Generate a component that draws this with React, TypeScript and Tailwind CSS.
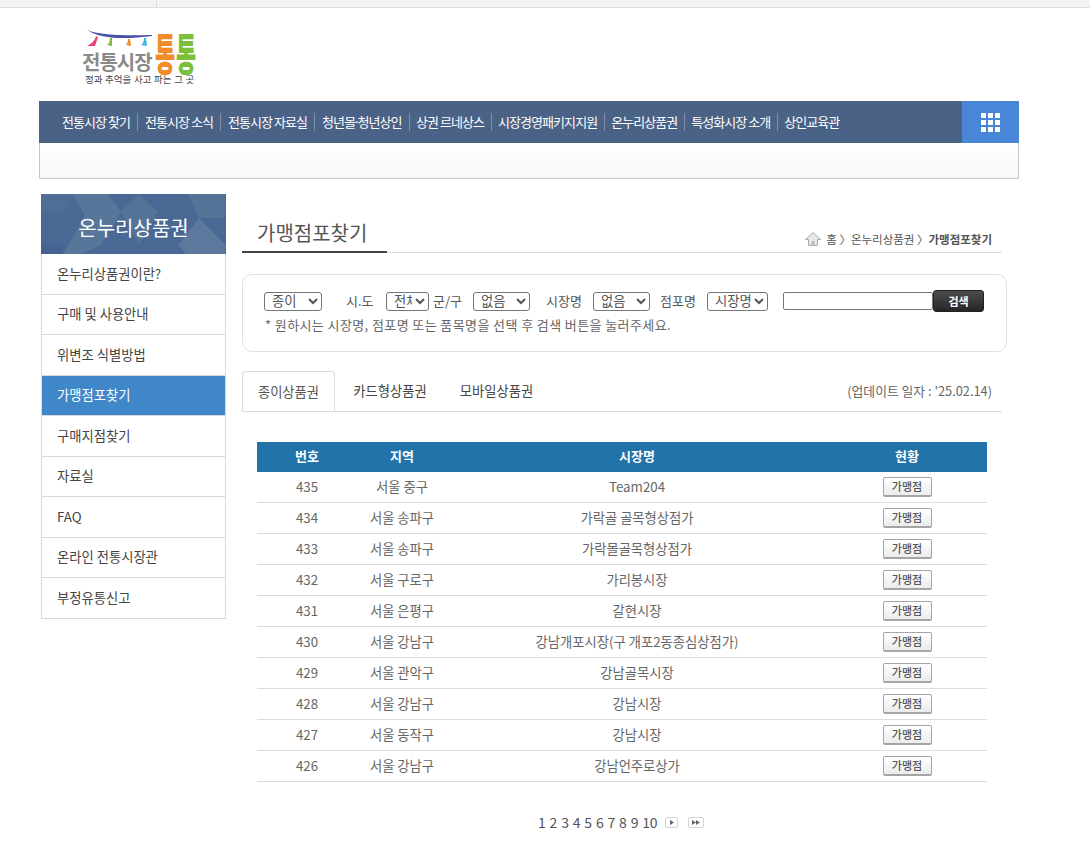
const navItems = ["전통시장 찾기", "전통시장 소식", "전통시장 자료실", "청년몰·청년상인", "상권 르네상스", "시장경영패키지지원", "온누리상품권", "특성화시장 소개", "상인교육관"];
const sideItems = ["온누리상품권이란?", "구매 및 사용안내", "위변조 식별방법", "가맹점포찾기", "구매지점찾기", "자료실", "FAQ", "온라인 전통시장관", "부정유통신고"];
const rows = [
  ["435", "서울 중구", "Team204"],
  ["434", "서울 송파구", "가락골 골목형상점가"],
  ["433", "서울 송파구", "가락몰골목형상점가"],
  ["432", "서울 구로구", "가리봉시장"],
  ["431", "서울 은평구", "갈현시장"],
  ["430", "서울 강남구", "강남개포시장(구 개포2동종심상점가)"],
  ["429", "서울 관악구", "강남골목시장"],
  ["428", "서울 강남구", "강남시장"],
  ["427", "서울 동작구", "강남시장"],
  ["426", "서울 강남구", "강남언주로상가"],
];

const selectCls = "h-[19px] border border-[#767676] rounded-[3px] text-[13.3px] pl-[3px] text-[#555] font-[family-name:'Liberation_Sans','Noto_Sans_CJK_KR',sans-serif]";

function navCls(i: number) {
  if (i === 0) return "pr-[7px] border-r border-[#7d90aa]";
  if (i < 4) return "px-[7px] border-r border-[#7d90aa]";
  if (i === 8) return "pl-[6.5px]";
  return "px-[6.5px] border-r border-[#7d90aa]";
}

function Logo() {
  return (
    <div className="relative w-[120px] h-[66px] font-[family-name:'Liberation_Sans','Noto_Sans_CJK_KR',sans-serif]">
      <svg className="absolute left-0 top-0" width="120" height="30" viewBox="0 0 120 30">
        <path d="M5 1 C15 5 32 7 70 6 L70 7 C46 10 20 11 5 1Z" fill="#4a4fa8" />
        <path d="M14 7 L16 8 L13 17 L5 17 C9 15 13 12 14 7Z" fill="#e8407a" />
        <path d="M28 9 L30 9 L30 17 L25 16 C27 15 28 12 28 9Z" fill="#7cbf3a" />
        <path d="M46 10 L48 10 L49 17 L44 16 C45 15 46 13 46 10Z" fill="#f28c28" />
        <path d="M62 9 L64 9 L65 17 L59 16 C61 15 62 12 62 9Z" fill="#3bb8e8" />
      </svg>
      <span className="absolute left-0 top-[23px] text-[20px] leading-[22px] font-bold text-[#8a8a8a] tracking-[-1px] whitespace-nowrap">전통시장</span>
      <div className="absolute left-[73px] top-[7px] flex">
        <span className="block w-[21px] h-[40px] text-[44px] leading-[40px] font-black text-[#f28c28] scale-x-[0.5] origin-left">통</span>
        <span className="block w-[21px] h-[40px] text-[44px] leading-[40px] font-black text-[#7cbf3a] scale-x-[0.5] origin-left">통</span>
      </div>
      <div className="absolute left-[3px] top-[45px] text-[9.5px] leading-[12px] text-[#444] whitespace-nowrap">정과 추억을 사고 파는 그 곳</div>
    </div>
  );
}

function SideHeader() {
  return (
    <div className="relative h-[60px] bg-[#4a6894] overflow-hidden flex items-center justify-center pt-[8px]">
      <svg className="absolute inset-0" width="184" height="60" viewBox="0 0 184 60">
        <polygon points="0,0 32,0 24,18 0,18" fill="#4f6d97" />
        <polygon points="32,0 67,0 80,18 60,51 40,60 22,60 44,22" fill="#587699" />
        <polygon points="80,18 98,0 117,18 98,51" fill="#557397" />
        <polygon points="147,0 184,0 184,24 158,24" fill="#557397" />
        <polygon points="137,51 158,24 184,51 184,60 145,60" fill="#5c799d" />
        <polygon points="0,51 22,51 22,60 0,60" fill="#456290" />
      </svg>
      <span className="relative text-[20px] text-white">온누리상품권</span>
    </div>
  );
}

export default function App() {
  return (
    <div className="w-[1090px] h-[854px] bg-white overflow-hidden text-[#555] font-[family-name:'Noto_Sans_CJK_KR','Noto_Sans',sans-serif]">
      <div className="h-[8px] bg-[#f3f3f3] border-b border-[#dedede] pl-[156px]">
        <div className="w-px h-[7px] bg-[#dcdcdc]" />
      </div>
      <header className="h-[93px] pl-[82px] pt-[21px]">
        <Logo />
      </header>

      <div className="ml-[39px] w-[980px]">
        <nav className="h-[42px] bg-[#4a6285] flex items-center justify-between">
          <ul className="flex items-center pl-[23px] text-[13px] tracking-[-0.95px] text-white">
            {navItems.map((n, i) => (
              <li key={n} className={`whitespace-nowrap leading-[15px] h-[18px] flex items-center pb-[1px] ${navCls(i)}`}>
                {n.includes("·") ? (
                  <span>{n.split("·")[0]}<span className="-mx-[2px]">·</span>{n.split("·")[1]}</span>
                ) : n}
              </li>
            ))}
          </ul>
          <div className="w-[57px] h-[42px] bg-[#4a86d8] flex items-center justify-center">
            <div className="grid grid-cols-3 gap-[2px]">
              {Array.from({ length: 9 }).map((_, i) => <span key={i} className="w-[5px] h-[5px] bg-white" />)}
            </div>
          </div>
        </nav>
        <div className="h-[36px] border border-t-0 border-[#c8c8c8] bg-gradient-to-b from-white to-[#f7f7f7]" />
      </div>

      <div className="flex pl-[41px] pt-[15px]">
        <aside className="w-[185px] shrink-0">
          <SideHeader />
          <ul className="border-x border-[#d8d8d8] text-[13.3px] text-[#444]">
            {sideItems.map((s) => (
              <li key={s} className={`h-[40.5px] flex items-center pl-[15px] pb-[0.4px] border-b border-[#d8d8d8] ${s === "가맹점포찾기" ? "bg-[#3f87c8] text-white" : ""}`}>{s}</li>
            ))}
          </ul>
        </aside>

        <main className="ml-[16px] w-[765px] shrink-0">
          <div className="w-[760px] h-[44px] border-b border-[#dcdcdc] flex justify-between items-end mt-[15px]">
            <h2 className="w-[145px] h-[44px] border-b-2 border-[#444] pl-[15px] text-[20px] leading-[48px] text-[#555] -mb-px">가맹점포찾기</h2>
            <div className="flex items-center pr-[10px] pb-[5px] text-[11.5px] leading-[16px] text-[#555]">
              <svg width="16" height="14" viewBox="0 0 16 14" className="mr-[5px]">
                <path d="M8 .5 L15.5 7.5 H12.5 V13.5 H3.5 V7.5 H.5Z" fill="#e8e8e8" stroke="#aaa" />
                <rect x="6.5" y="9" width="3" height="4.5" fill="#bbb" />
              </svg>
              <span>홈 〉온누리상품권 〉</span>
              <span className="font-bold">가맹점포찾기</span>
            </div>
          </div>

          <section className="mt-[21px] w-[765px] h-[78px] border border-[#e0e0e0] rounded-[10px] pl-[21px] pt-[15px] text-[13px] text-[#555]">
            <div className="flex items-center h-[22px]">
              <select className={`w-[58px] ${selectCls}`}><option>종이</option></select>
              <span className="ml-[24px] w-[40px]">시.도</span>
              <select className={`w-[43px] ${selectCls}`}><option>전체</option></select>
              <span className="ml-[4px] w-[40px]">군/구</span>
              <select className={`w-[57px] ${selectCls}`}><option>없음</option></select>
              <span className="ml-[16px] w-[47px]">시장명</span>
              <select className={`w-[57px] ${selectCls}`}><option>없음</option></select>
              <span className="ml-[10px] w-[47px]">점포명</span>
              <select className={`w-[61px] ${selectCls}`}><option>시장명</option></select>
              <input className="ml-[15px] w-[150px] h-[18px] border border-[#767676] rounded-[2px]" />
              <button className="w-[51px] h-[22px] rounded-[3px] bg-gradient-to-b from-[#4d4d4d] to-[#262626] border border-[#222] text-white text-[11px] font-bold">검색</button>
            </div>
            <p className="mt-[4px] text-[13px] leading-[18px] text-[#666] tracking-[0.4px] pl-[1px]">* 원하시는 시장명, 점포명 또는 품목명을 선택 후 검색 버튼을 눌러주세요.</p>
          </section>

          <div className="mt-[19px] w-[760px] h-[41px] border-b border-[#dcdcdc] flex items-end justify-between">
            <div className="flex h-[41px] items-end text-[13.3px] text-[#444]">
              <div className="w-[93px] h-[40px] border border-b-0 border-[#dcdcdc] rounded-t-[4px] bg-white flex items-center justify-center text-[#555] relative z-10">종이상품권</div>
              <div className="w-[108px] h-[40px] flex items-center justify-center ml-[1px]">카드형상품권</div>
              <div className="w-[107px] h-[40px] flex items-center justify-center -ml-[1px]">모바일상품권</div>
            </div>
            <div className="h-[41px] flex items-center pr-[10px] text-[12.8px] text-[#666]">(업데이트 일자 : '25.02.14)</div>
          </div>

          <table className="ml-[15px] mt-[30px] w-[730px] table-fixed border-collapse text-[13.3px] text-[#666]">
            <colgroup>
              <col className="w-[100px]" />
              <col className="w-[90px]" />
              <col className="w-[380px]" />
              <col className="w-[160px]" />
            </colgroup>
            <thead>
              <tr className="h-[30px] bg-[#2273a9] text-white font-bold text-[13px]">
                <th className="pb-[2px]">번호</th>
                <th className="pb-[2px]">지역</th>
                <th className="pb-[2px]">시장명</th>
                <th className="pb-[2px]">현황</th>
              </tr>
            </thead>
            <tbody>
              {rows.map((r, i) => (
                <tr key={r[0]} className={`border-b border-[#dcdcdc] text-center ${i === 0 ? "h-[30px]" : "h-[31px]"}`}>
                  <td>{r[0]}</td>
                  <td>{r[1]}</td>
                  <td>{r[2]}</td>
                  <td className="pb-[1px]">
                    <button className="w-[49px] h-[20px] align-middle rounded-[2px] bg-gradient-to-b from-white to-[#ececec] border border-[#a5a5a5] border-b-2 text-[11px] font-medium leading-[16px] text-[#555]">가맹점</button>
                  </td>
                </tr>
              ))}
            </tbody>
          </table>

          <div className="ml-[296px] mt-[31px] flex items-center h-[20px] text-[14px] text-[#555]">
            <div className="flex gap-[3.8px]">
              {[1, 2, 3, 4, 5, 6, 7, 8, 9].map((n) => <span key={n}>{n}</span>)}
              <span className="tracking-[-0.3px]">10</span>
            </div>
            <span className="ml-[8px] w-[13px] h-[11px] border border-[#d4d4d4] rounded-[2px] flex items-center justify-center">
              <svg width="4" height="5" viewBox="0 0 4 5"><path d="M0 0 L4 2.5 L0 5Z" fill="#666" /></svg>
            </span>
            <span className="ml-[10px] w-[16px] h-[11px] border border-[#d4d4d4] rounded-[2px] flex items-center justify-center">
              <svg width="8" height="5" viewBox="0 0 8 5"><path d="M0 0 L4 2.5 L0 5Z M4 0 L8 2.5 L4 5Z" fill="#666" /></svg>
            </span>
          </div>
        </main>
      </div>
    </div>
  );
}
